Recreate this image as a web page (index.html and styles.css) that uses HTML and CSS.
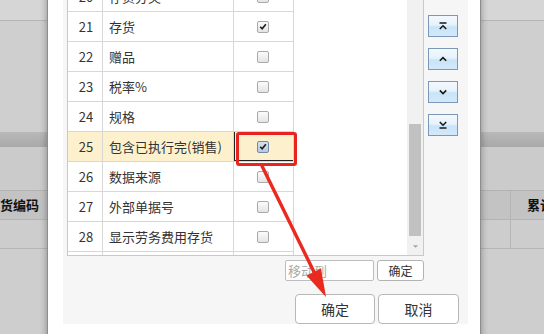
FILE: index.html
```html
<!DOCTYPE html>
<html>
<head>
<meta charset="utf-8">
<link rel="stylesheet" href="styles.css">
</head>
<body>
<div class="page">
  <div class="bg-top"></div>
  <div class="bg-mid"></div>
  <div class="bg-band"></div>
  <div class="bg-gap"></div>
  <div class="bg-head"><span class="bg-h1">货编码</span><span class="bg-sep"></span><span class="bg-h2">累计</span></div>
  <div class="bg-row"><span class="bg-c1"></span><span class="bg-sep"></span><span class="bg-c2"></span></div>
  <div class="bg-rest"></div>
</div>

<div class="dialog">
  <div class="panel">
    <div class="main">
      <div class="grid-box">
        <div class="grid">
          <div class="row"><span class="c-no">20</span><span class="c-name">存货分类</span><span class="c-chk"><span class="cb"></span></span></div>
          <div class="row"><span class="c-no">21</span><span class="c-name">存货</span><span class="c-chk"><span class="cb"><svg viewBox="0 0 12 12"><path d="M2.6 6.3 L5 8.7 L9.4 3.2"/></svg></span></span></div>
          <div class="row"><span class="c-no">22</span><span class="c-name">赠品</span><span class="c-chk"><span class="cb"></span></span></div>
          <div class="row"><span class="c-no">23</span><span class="c-name">税率%</span><span class="c-chk"><span class="cb"></span></span></div>
          <div class="row"><span class="c-no">24</span><span class="c-name">规格</span><span class="c-chk"><span class="cb"></span></span></div>
          <div class="row row-sel"><span class="c-no">25</span><span class="c-name">包含已执行完(销售)</span><span class="c-chk c-focus"><span class="cb cb-focus"><svg viewBox="0 0 12 12"><path d="M2.6 6.3 L5 8.7 L9.4 3.2"/></svg></span></span></div>
          <div class="row"><span class="c-no">26</span><span class="c-name">数据来源</span><span class="c-chk"><span class="cb"></span></span></div>
          <div class="row"><span class="c-no">27</span><span class="c-name">外部单据号</span><span class="c-chk"><span class="cb"></span></span></div>
          <div class="row"><span class="c-no">28</span><span class="c-name">显示劳务费用存货</span><span class="c-chk"><span class="cb"></span></span></div>
          <div class="row"><span class="c-no"></span><span class="c-name"></span><span class="c-chk"></span></div>
        </div>
        <div class="vscroll">
          <div class="track"><div class="thumb"></div></div>
          <div class="down"><svg viewBox="0 0 8 5"><path d="M1 1 L4 4 L7 1 Z"/></svg></div>
        </div>
      </div>
      <div class="tools">
        <button class="tbtn"><svg viewBox="0 0 10 8"><path d="M1.5 1 H8.5 M1.8 7 L5 3.8 L8.2 7"/></svg></button>
        <button class="tbtn"><svg viewBox="0 0 10 8"><path d="M1.8 5.8 L5 2.6 L8.2 5.8"/></svg></button>
        <button class="tbtn"><svg viewBox="0 0 10 8"><path d="M1.8 2.4 L5 5.6 L8.2 2.4"/></svg></button>
        <button class="tbtn"><svg viewBox="0 0 10 8"><path d="M1.8 1 L5 4.2 L8.2 1 M1.5 7 H8.5"/></svg></button>
      </div>
    </div>
    <div class="move-row">
      <input class="move-input" type="text" placeholder="移动到">
      <button class="move-btn">确定</button>
    </div>
    <div class="footer">
      <button class="fbtn fbtn-ok">确定</button>
      <button class="fbtn fbtn-cancel">取消</button>
    </div>
  </div>
</div>

<div class="redbox"></div>
<svg class="arrow" viewBox="0 0 544 334" width="544" height="334">
  <line x1="262" y1="166" x2="315" y2="274" class="arrow-line"/>
  <polygon points="326,297 306.5,275.5 321,268.5" class="arrow-head"/>
</svg>
</body>
</html>
```

FILE: styles.css
```css
* {
  box-sizing: border-box;
}

html, body {
  margin: 0;
  padding: 0;
}

body {
  width: 544px;
  height: 334px;
  overflow: hidden;
  position: relative;
  font-family: "Noto Sans CJK SC", "Microsoft YaHei", "Noto Sans", sans-serif;
  font-size: 13px;
  color: #333;
  background: #cdcdcd;
}

/* ---------- background page (behind the modal) ---------- */
.page {
  display: flex;
  flex-direction: column;
  width: 544px;
}

.bg-top {
  height: 21px;
  background: #d6d6d6;
  border-bottom: 1px solid #b6b6b6;
}

.bg-mid {
  height: 111px;
  background: #cfcfcf;
}

.bg-band {
  height: 15px;
  background: linear-gradient(#b9b9b9, #a9a9a9);
}

.bg-gap {
  height: 43px;
  background: #cbcbcb;
}

.bg-head {
  height: 30px;
  display: flex;
  background: #c3c3c3;
  border-top: 1px solid #b2b2b2;
  border-bottom: 1px solid #b4b4b4;
  font-weight: bold;
  color: #111;
  line-height: 28px;
}

.bg-h1 {
  width: 510px;
  flex: none;
}

.bg-sep {
  width: 1px;
  flex: none;
  background: #b4b4b4;
}

.bg-h2 {
  flex: none;
  padding-left: 16px;
  white-space: nowrap;
}

.bg-row {
  height: 29px;
  display: flex;
  background: #cdcdcd;
  border-bottom: 1px solid #b6b6b6;
}

.bg-c1 {
  width: 510px;
  flex: none;
}

.bg-rest {
  height: 100px;
  background: #cecece;
}

/* ---------- modal dialog ---------- */
.dialog {
  position: absolute;
  left: 47px;
  top: -40px;
  width: 434px;
  height: 390px;
  background: #fff;
  border: 1px solid #8d8d8d;
  box-shadow: 0 0 7px rgba(0, 0, 0, 0.35);
  padding: 9px 0 0 15px;
}

.panel {
  width: 405px;
  background: #f6f6f6;
  padding: 12px 0 0 4px;
  display: flex;
  flex-direction: column;
}

.main {
  display: flex;
  align-items: flex-start;
}

.grid-box {
  width: 357px;
  height: 274px;
  border: 1px solid #c9c9c9;
  background: #fff;
  display: flex;
  overflow: hidden;
}

.grid {
  width: 226px;
  display: flex;
  flex-direction: column;
  flex: none;
  margin-top: -1px;
}

.row {
  display: grid;
  grid-template-columns: 35px 131px 60px;
  height: 30px;
  flex: none;
}

.row > span {
  border-right: 1px solid #d7d7d7;
  border-bottom: 1px solid #d7d7d7;
  display: flex;
  align-items: center;
  line-height: 16px;
  white-space: nowrap;
  overflow: hidden;
}

.c-no {
  justify-content: center;
  padding-left: 2px;
  color: #333;
}

.c-name {
  padding-left: 6px;
}

.c-chk {
  justify-content: center;
}

.row-sel > span {
  background: #fcf1cc;
}

.c-focus {
  box-shadow: inset 1px 0 0 #222, inset 0 -1px 0 #222;
}

.cb {
  width: 12px;
  height: 12px;
  border: 1px solid #a9a9a9;
  border-radius: 2px;
  background: linear-gradient(#fbfbfb, #e4e4e4);
  display: flex;
  align-items: center;
  justify-content: center;
  margin-left: -1px;
}

.cb svg {
  width: 11px;
  height: 11px;
  fill: none;
  stroke: #1e1e1e;
  stroke-width: 1.9;
}

.cb-focus {
  background: linear-gradient(#d6e1ee, #b9c9dd);
  border-color: #7289a8;
}

/* fake vertical scrollbar */
.vscroll {
  margin-left: auto;
  width: 16px;
  height: 272px;
  background: #f1f1f1;
  display: flex;
  flex-direction: column;
}

.track {
  flex: 1;
  padding: 141px 2px 0 2px;
}

.thumb {
  height: 112px;
  background: #c1c1c1;
}

.down {
  height: 17px;
  display: flex;
  align-items: center;
  justify-content: center;
}

.down svg {
  width: 7px;
  height: 5px;
  fill: #a3a3a3;
}

/* move up / down tools */
.tools {
  display: flex;
  flex-direction: column;
  gap: 11px;
  padding-top: 33px;
  margin-left: 4px;
}

.tbtn {
  width: 30px;
  height: 22px;
  padding: 0;
  margin: 0;
  border: 1px solid #7b98b6;
  border-radius: 0;
  background: linear-gradient(#f3f9fe 0%, #e6f2fb 45%, #c9e3f8 55%, #d3e9fa 100%);
  display: flex;
  align-items: center;
  justify-content: center;
}

.tbtn svg {
  width: 10px;
  height: 8px;
  fill: none;
  stroke: #1a1a1a;
  stroke-width: 1.6;
}

/* move-to row */
.move-row {
  width: 357px;
  display: flex;
  justify-content: flex-end;
  gap: 3px;
  margin-top: 4px;
}

.move-input {
  width: 89px;
  height: 21px;
  border: 1px solid #bdbdbd;
  border-radius: 2px;
  padding: 0 2px;
  margin: 0;
  font-family: inherit;
  font-size: 13px;
  background: #fff;
  outline: none;
}

.move-input::placeholder {
  color: #a9a9a9;
}

.move-btn {
  width: 47px;
  height: 21px;
  padding: 0;
  margin: 0;
  border: 1px solid #b3b3b3;
  border-radius: 3px;
  background: #fff;
  font-family: inherit;
  font-size: 12px;
  color: #333;
  line-height: 19px;
}

/* footer buttons */
.footer {
  display: flex;
  justify-content: flex-end;
  gap: 3px;
  margin-top: 13px;
  padding-right: 9px;
}

.fbtn {
  height: 30px;
  padding: 0;
  margin: 0;
  border: 1px solid #b8b8b8;
  border-radius: 4px;
  background: #fff;
  font-family: inherit;
  font-size: 14px;
  color: #333;
}

.fbtn-ok {
  width: 80px;
}

.fbtn-cancel {
  width: 81px;
}

/* ---------- red annotation ---------- */
.redbox {
  position: absolute;
  left: 236px;
  top: 132px;
  width: 61px;
  height: 34px;
  border: 3px solid #e6261e;
  border-radius: 3px;
}

.arrow {
  position: absolute;
  left: 0;
  top: 0;
  pointer-events: none;
}

.arrow-line {
  stroke: #ea2a1f;
  stroke-width: 3.4;
  stroke-linecap: round;
}

.arrow-head {
  fill: #ea2a1f;
}
```
